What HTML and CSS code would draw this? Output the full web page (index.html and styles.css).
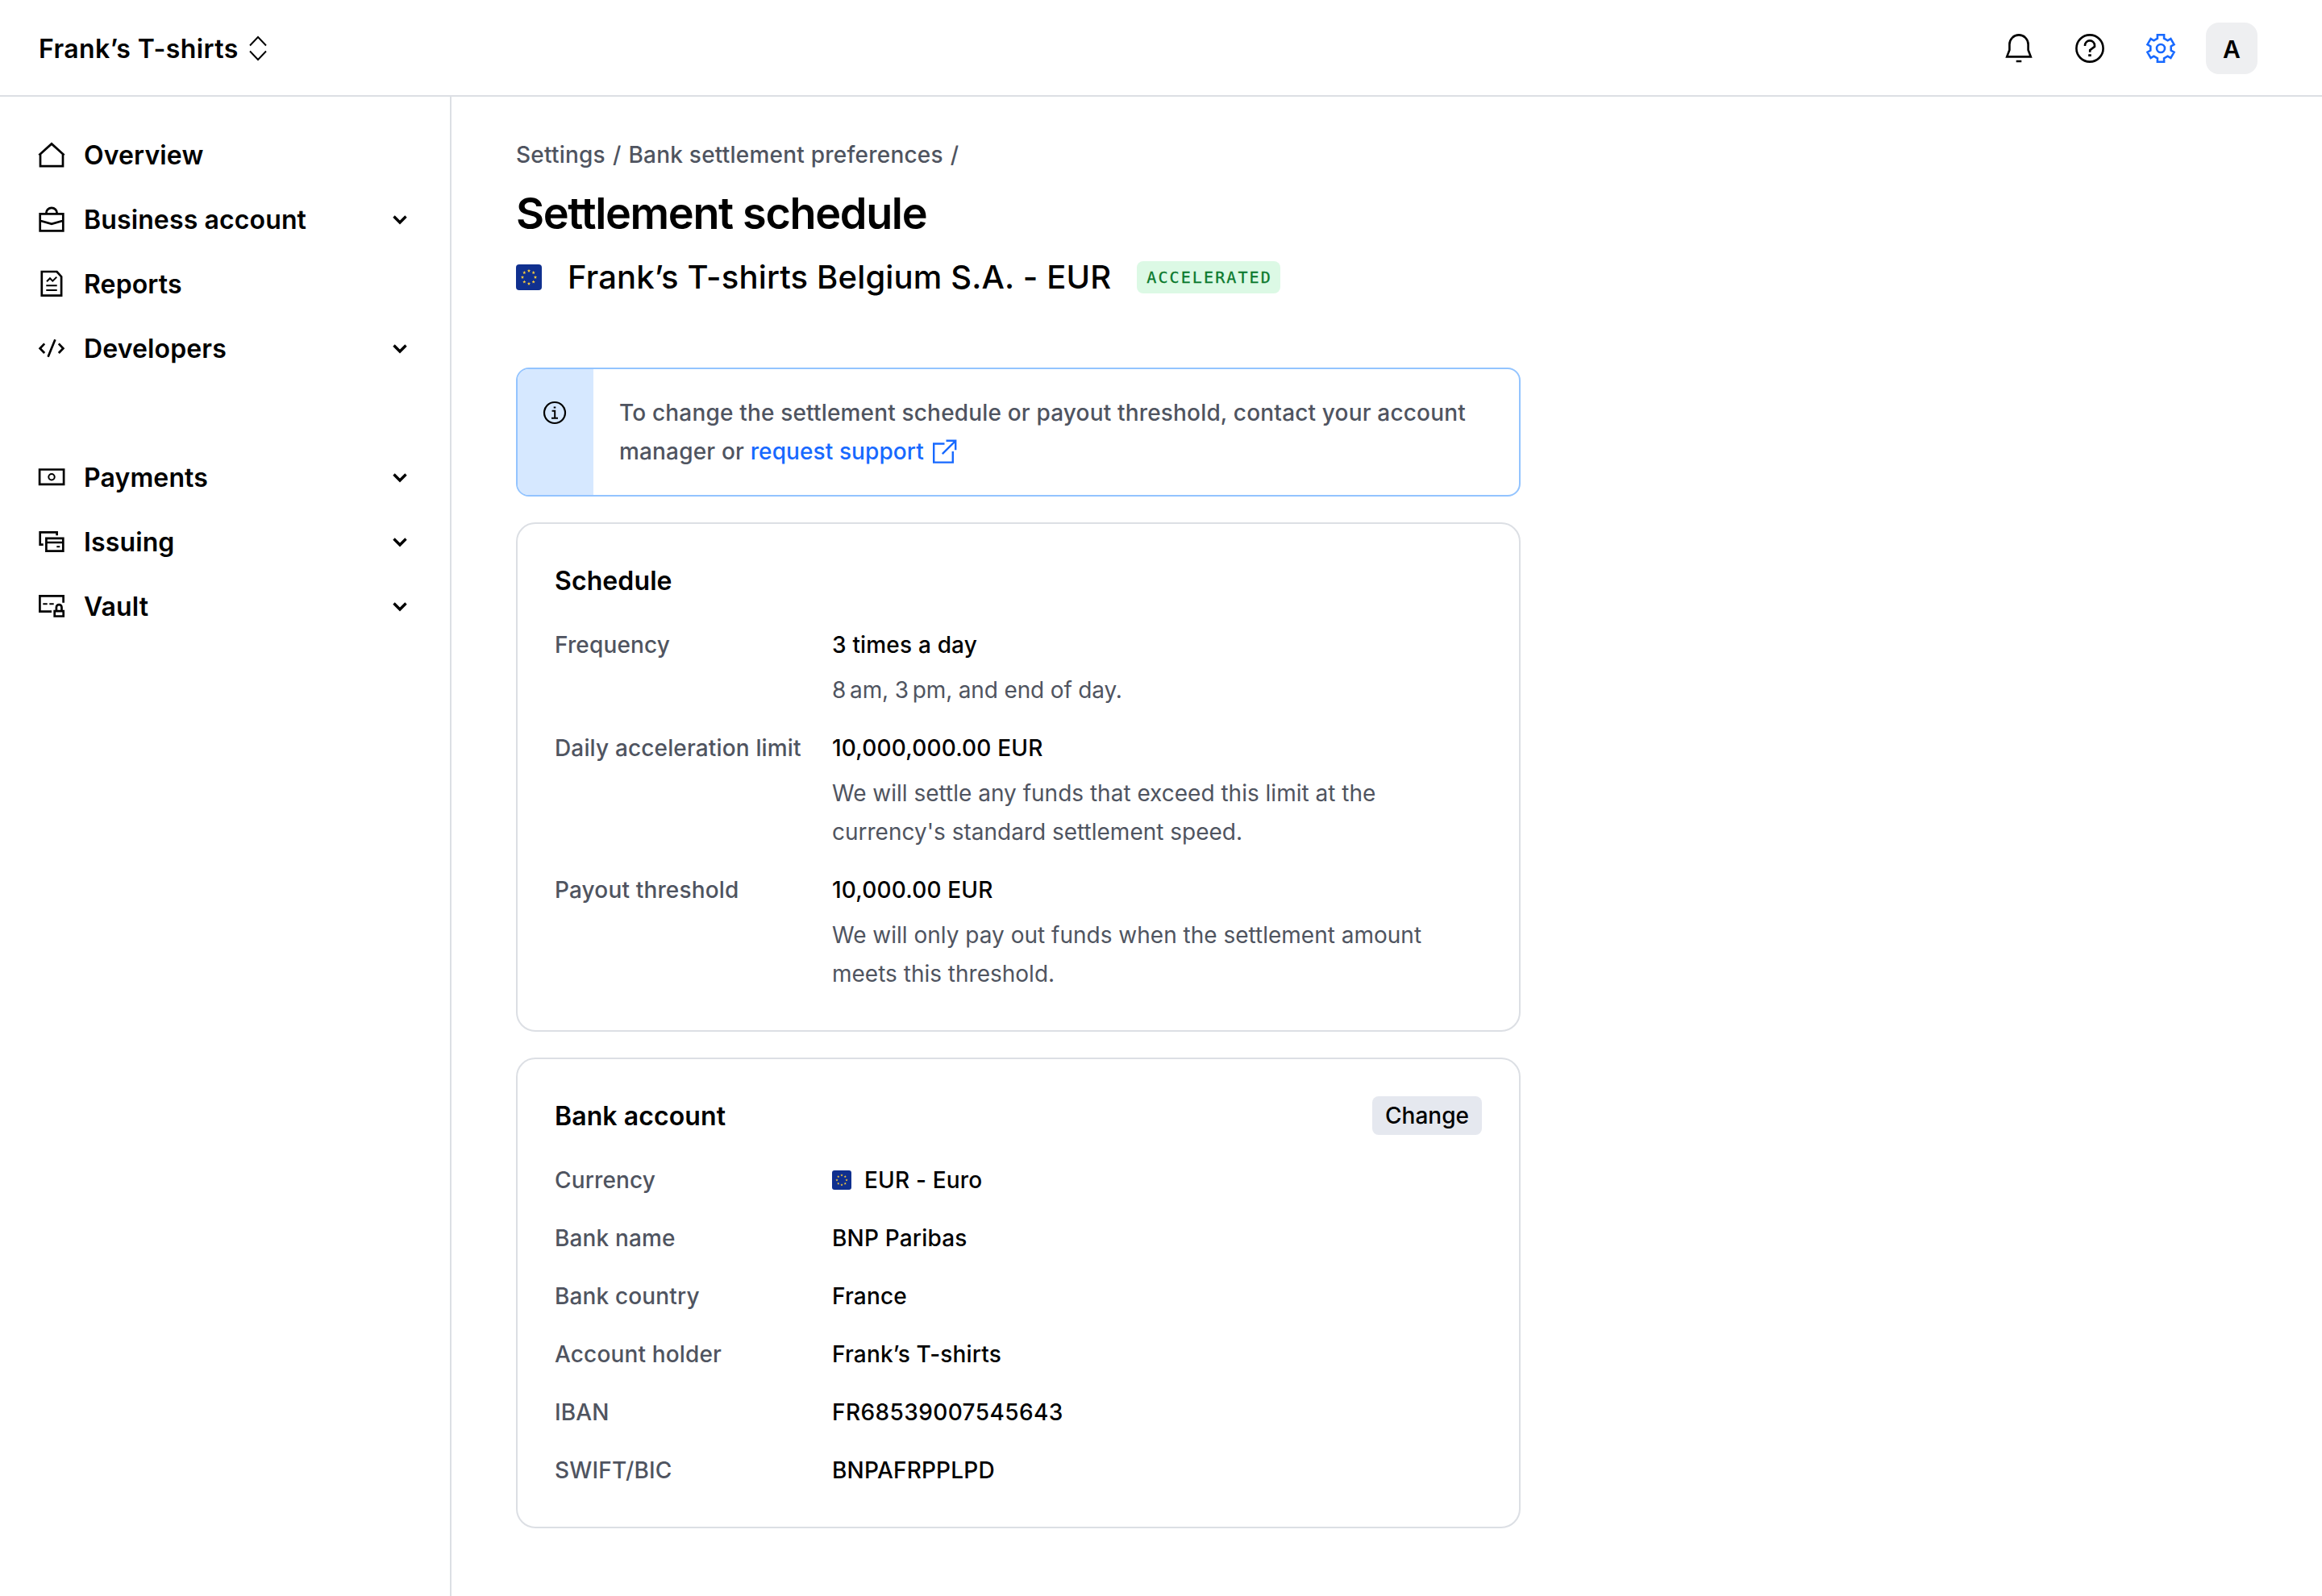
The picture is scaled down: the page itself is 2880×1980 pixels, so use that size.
FILE: index.html
```html
<!DOCTYPE html>
<html lang="en">
<head>
    <meta charset="UTF-8">
    <meta name="viewport" content="width=device-width, initial-scale=1.0">
    <title>Settlement schedule</title>
    <link rel="stylesheet" href="styles.css">
</head>
<body>
<!-- Shared shapes -->
<svg class="sprite" aria-hidden="true">
    <symbol id="chevron" viewBox="0 0 48 48">
        <path d="M16.5 20.5 24 28l7.5-7.5" fill="none" stroke="currentColor" stroke-width="3.4"/>
    </symbol>
    <symbol id="flag-eu" viewBox="0 0 32 32">
        <defs>
            <path id="star" d="M0-2.2.6-.7 2.1-.7.9.3 1.3 1.8 0 .9-1.3 1.8-.9.3-2.1-.7-.6-.7z" fill="#ffcf3a"/>
        </defs>
        <rect width="32" height="32" rx="4" fill="#10308f"/>
        <use href="#star" x="16" y="8"/>
        <use href="#star" x="21.7" y="10.3"/>
        <use href="#star" x="24" y="16"/>
        <use href="#star" x="21.7" y="21.7"/>
        <use href="#star" x="16" y="24"/>
        <use href="#star" x="10.3" y="21.7"/>
        <use href="#star" x="8" y="16"/>
        <use href="#star" x="10.3" y="10.3"/>
    </symbol>
</svg>

<!-- Top bar -->
<header class="topbar">
    <div class="org">
        <span>Frank’s T-shirts</span>
        <svg class="icon" viewBox="0 0 48 48" stroke-width="1.9">
            <path d="M14 20.5 24 10l10 10.5M14 27.5 24 38l10-10.5"/>
        </svg>
    </div>
    <div class="actions">
        <svg class="icon" viewBox="0 0 48 48" stroke-width="2.6">
            <path d="M12.4 19a11.6 11.6 0 0 1 23.2 0v7l3.2 8.4H9.2l3.2-8.4zM20.7 40h6.6"/>
        </svg>
        <svg class="icon" viewBox="0 0 48 48" stroke-width="2.6">
            <circle cx="24" cy="24" r="16.6"/>
            <path d="M18 21v-.6a6 6 0 0 1 12 0v1.4l-5.8 4.4v2.6M22.2 32.6h3.6"/>
        </svg>
        <svg class="icon active" viewBox="0 0 48 48" stroke-width="2.6">
            <path d="M28.1 7.3v4.4l4.5 2.6 3.8-2.2 4.1 7.1-3.8 2.2v5.2l3.8 2.2-4.1 7.1-3.8-2.2-4.5 2.6v4.4h-8.2v-4.4l-4.5-2.6-3.8 2.2-4.1-7.1 3.8-2.2v-5.2l-3.8-2.2 4.1-7.1 3.8 2.2 4.5-2.6V7.3z"/>
            <circle cx="24" cy="24" r="5"/>
        </svg>
        <div class="avatar">A</div>
    </div>
</header>

<div class="layout">
    <!-- Sidebar -->
    <nav class="sidebar">
        <a class="nav-item">
            <svg class="icon" viewBox="0 0 48 48" stroke-width="2.7">
                <path d="M8.4 24.4 24 10.4l15.6 14M10 23v15.2h28V23"/>
            </svg>
            <span>Overview</span>
        </a>
        <a class="nav-item">
            <svg class="icon" viewBox="0 0 48 48" stroke-width="2.7">
                <path d="M9.7 17.3h28.6v21H9.7zM17.3 17v-.5a6.7 6.7 0 0 1 13.4 0v.5M9.7 25.8l14.3 4 14.3-4"/>
            </svg>
            <span>Business account</span>
            <svg class="icon chevron"><use href="#chevron"/></svg>
        </a>
        <a class="nav-item">
            <svg class="icon" viewBox="0 0 48 48" stroke-width="2.7">
                <path d="M11.8 9h18.7l5.6 6.2v23.4H11.8z"/>
                <path stroke-width="2" d="M17.3 26.3h13.4M17.3 32h13.4M18 21.2l4-4 3.3 3.4 5-5"/>
            </svg>
            <span>Reports</span>
        </a>
        <a class="nav-item">
            <svg class="icon" viewBox="0 0 48 48" stroke-width="2.7">
                <path d="M15.2 18.4 9.6 24.2l5.6 5.8M32.8 18.4l5.6 5.8-5.6 5.8M28.4 13.2l-8.8 21.6"/>
            </svg>
            <span>Developers</span>
            <svg class="icon chevron"><use href="#chevron"/></svg>
        </a>
        <a class="nav-item group-start">
            <svg class="icon" viewBox="0 0 48 48" stroke-width="2.7">
                <path d="M9.1 14.5h30v18.4h-30z"/>
                <circle cx="24" cy="23.8" r="3.7" stroke-width="2"/>
            </svg>
            <span>Payments</span>
            <svg class="icon chevron"><use href="#chevron"/></svg>
        </a>
        <a class="nav-item">
            <svg class="icon" viewBox="0 0 48 48" stroke-width="2.7">
                <path d="M30.6 16.3v-4H9.7v15.4h4M17.4 19.8h20.9v15.8H17.4zM17.4 25h20.9"/>
                <path stroke-width="2" d="M30.3 30.2h4"/>
            </svg>
            <span>Issuing</span>
            <svg class="icon chevron"><use href="#chevron"/></svg>
        </a>
        <a class="nav-item">
            <svg class="icon" viewBox="0 0 48 48" stroke-width="2.7">
                <path d="M38.6 19.8v-8.4H9.4v19.2H24M27.7 30.1h11v6.4h-11zM29.9 30v-4.6a3.3 3.3 0 0 1 6.6 0V30"/>
                <path stroke-width="2" d="M13.3 21.3h5.4M21.3 21.3h5.4"/>
            </svg>
            <span>Vault</span>
            <svg class="icon chevron"><use href="#chevron"/></svg>
        </a>
    </nav>

    <!-- Page content -->
    <main class="content">
        <div class="breadcrumb">
            <a>Settings</a>
            <span>/</span>
            <a>Bank settlement preferences</a>
            <span>/</span>
        </div>
        <h1>Settlement schedule</h1>
        <div class="entity">
            <svg class="flag"><use href="#flag-eu"/></svg>
            <h2>Frank’s T-shirts Belgium S.A. - EUR</h2>
            <span class="badge">ACCELERATED</span>
        </div>

        <div class="alert">
            <div class="alert-side">
                <svg class="icon" viewBox="0 0 48 48" stroke-width="2.2">
                    <circle cx="24" cy="24" r="13"/>
                    <path stroke-width="2" d="M20.6 21.7h3.6v9M20 30.7h8M22.7 17.5h2.6"/>
                </svg>
            </div>
            <p>To change the settlement schedule or payout threshold, contact your account<br>
                manager or <a>request support<svg class="external" viewBox="0 0 32 32">
                    <path d="M15.5 6.5H2.2v23.1h23.6V16M17.5 2.8h11.7v11.5M12.8 19.2 29.2 2.8"/>
                </svg></a></p>
        </div>

        <section class="card">
            <div class="card-head">
                <h3>Schedule</h3>
            </div>
            <dl>
                <dt>Frequency</dt>
                <dd>
                    3 times a day
                    <p class="note hours">8&#8201;am, 3&#8201;pm, and end of day.</p>
                </dd>
                <dt>Daily acceleration limit</dt>
                <dd>
                    10,000,000.00 EUR
                    <p class="note">We will settle any funds that exceed this limit at the<br>currency's standard settlement speed.</p>
                </dd>
                <dt>Payout threshold</dt>
                <dd>
                    10,000.00 EUR
                    <p class="note">We will only pay out funds when the settlement amount<br>meets this threshold.</p>
                </dd>
            </dl>
        </section>

        <section class="card">
            <div class="card-head">
                <h3>Bank account</h3>
                <button type="button">Change</button>
            </div>
            <dl>
                <dt>Currency</dt>
                <dd class="currency"><svg class="flag small"><use href="#flag-eu"/></svg>EUR - Euro</dd>
                <dt>Bank name</dt>
                <dd>BNP Paribas</dd>
                <dt>Bank country</dt>
                <dd>France</dd>
                <dt>Account holder</dt>
                <dd>Frank’s T-shirts</dd>
                <dt>IBAN</dt>
                <dd class="iban">FR68539007545643</dd>
                <dt>SWIFT/BIC</dt>
                <dd>BNPAFRPPLPD</dd>
            </dl>
        </section>
    </main>
</div>
</body>
</html>
```
FILE: styles.css
```css
/* General Reset */
* {
    box-sizing: border-box;
}

body {
    margin: 0;
    background: #fff;
    color: #000;
    font-family: Inter, "Liberation Sans", sans-serif;
    font-size: 28px;
    line-height: 48px;
    min-height: 100vh;
    display: flex;
    flex-direction: column;
}

h1, h2, h3, p, dl, dd {
    margin: 0;
}

.sprite {
    display: none;
}

/* Icons */
.icon {
    width: 48px;
    height: 48px;
    flex: none;
    fill: none;
    stroke: currentColor;
}

.icon.active {
    color: #1769ff;
}

.flag {
    width: 32px;
    height: 32px;
    flex: none;
}

.flag.small {
    width: 24px;
    height: 24px;
}

/* Top bar */
.topbar {
    display: flex;
    align-items: center;
    justify-content: space-between;
    height: 120px;
    padding: 2px 80px 0 48px;
    border-bottom: 2px solid #dcdfe4;
}

.org {
    display: flex;
    align-items: center;
    font-size: 32px;
    font-weight: 560;
    letter-spacing: 0.42px;
}

.org span {
    padding-top: 2px;
}

.actions {
    display: flex;
    align-items: center;
    gap: 40px;
}

.avatar {
    width: 64px;
    height: 64px;
    margin-left: -8px;
    border-radius: 16px;
    background: #eeeff1;
    font-size: 30px;
    font-weight: 560;
    line-height: 66px;
    text-align: center;
}

/* Layout */
.layout {
    display: flex;
    flex: 1;
}

.sidebar {
    display: flex;
    flex-direction: column;
    gap: 32px;
    width: 560px;
    padding: 48px 38px 0 40px;
    border-right: 2px solid #dcdfe4;
}

.nav-item {
    display: flex;
    align-items: center;
    gap: 16px;
    height: 48px;
    font-size: 32px;
    font-weight: 560;
    letter-spacing: 0.13px;
}

.nav-item span {
    padding-top: 2px;
}

.nav-item .chevron {
    margin-left: auto;
}

.group-start {
    margin-top: 80px;
}

.content {
    width: 1326px;
    padding: 48px 0 0 80px;
}

.breadcrumb {
    display: flex;
    gap: 9px;
    color: #4f5460;
    font-weight: 450;
    letter-spacing: 0.22px;
}

h1 {
    margin-top: 16px;
    font-size: 54px;
    font-weight: 600;
    line-height: 66px;
    letter-spacing: -1.35px;
}

.entity {
    display: flex;
    align-items: center;
    gap: 32px;
    margin-top: 22px;
}

h2 {
    font-size: 40px;
    font-weight: 530;
    line-height: 48px;
    letter-spacing: 0.15px;
}

.badge {
    height: 40px;
    padding: 0 10px 0 12px;
    border-radius: 8px;
    background: #dcf9e5;
    color: #0b7a2e;
    font-family: "DejaVu Sans Mono", monospace;
    font-size: 20px;
    line-height: 41px;
    letter-spacing: 2.1px;
    -webkit-text-stroke: 0.3px;
}

/* Alert */
.alert {
    display: flex;
    height: 160px;
    margin: 88px 0 32px;
    border: 2px solid #93c4ff;
    border-radius: 16px;
    overflow: hidden;
    color: #4f5460;
    font-weight: 450;
    letter-spacing: 0.17px;
}

.alert-side {
    width: 94px;
    padding: 30px 0 0 22px;
    background: #d6e8ff;
    color: #000;
}

.alert p {
    padding: 30px 0 0 32px;
    white-space: nowrap;
}

.alert a {
    color: #1769ff;
    font-weight: 500;
    letter-spacing: 0.1px;
}

.external {
    width: 32px;
    height: 32px;
    margin-left: 10px;
    vertical-align: -6px;
    fill: none;
    stroke: currentColor;
    stroke-width: 2.4;
}

/* Cards */
.card {
    margin-bottom: 32px;
    padding: 46px;
    border: 2px solid #dcdfe4;
    border-radius: 24px;
}

.card-head {
    display: flex;
    align-items: center;
    justify-content: space-between;
    margin-bottom: 32px;
}

h3 {
    padding-top: 2px;
    font-size: 32px;
    font-weight: 600;
    line-height: 46px;
    letter-spacing: 0.1px;
}

button {
    height: 48px;
    padding: 0 16px;
    border: none;
    border-radius: 8px;
    background: #e5e8ef;
    color: #000;
    font: 500 28px/48px Inter, "Liberation Sans", sans-serif;
}

dl {
    display: grid;
    grid-template-columns: 344px 1fr;
    row-gap: 24px;
    font-weight: 500;
    letter-spacing: 0.18px;
}

dt, .note {
    color: #4f5460;
}

dt {
    font-weight: 450;
    letter-spacing: 0.15px;
}

.note {
    margin-top: 8px;
    font-weight: 400;
    letter-spacing: 0;
    white-space: nowrap;
}

.hours {
    letter-spacing: -0.15px;
}

.iban {
    letter-spacing: 0.4px;
}

.currency {
    display: flex;
    align-items: center;
    gap: 16px;
}
```
